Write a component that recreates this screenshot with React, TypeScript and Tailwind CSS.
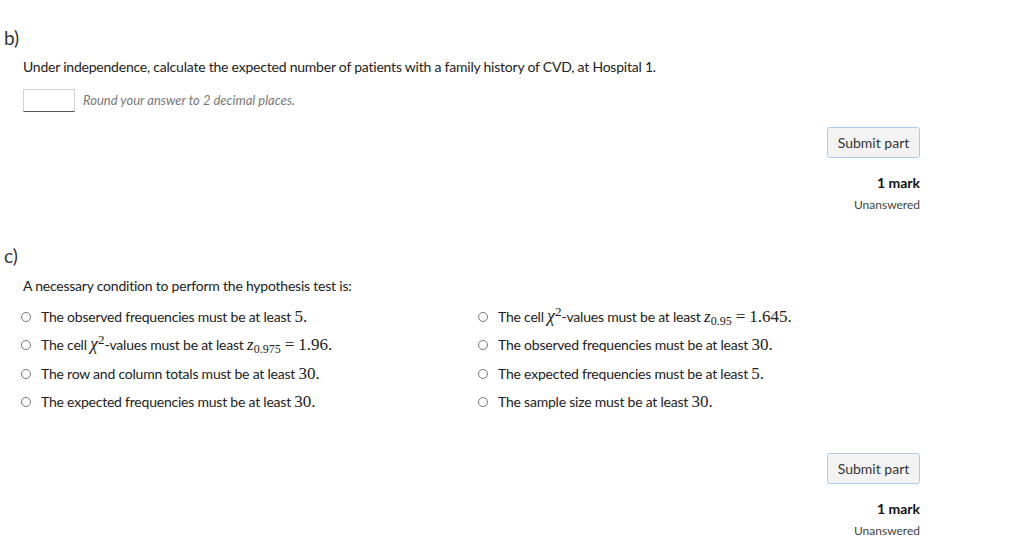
import React from 'react';

type Option = { id: string; content: React.ReactNode };

const M = ({ children }: { children: React.ReactNode }) => (
  <span className="font-['Liberation_Serif',serif] text-[17px] leading-none tracking-normal">{children}</span>
);

const Eq = ({ value }: { value: string }) => (
  <span className="font-['Liberation_Serif',serif] text-[17px] leading-none tracking-normal">
    <span className="mx-[4px]">=</span>
    {value}
  </span>
);

const Chi = () => (
  <span className="font-['Liberation_Serif',serif] text-[18px] leading-none tracking-normal">
    <i>χ</i>
    <sup className="text-[13px] leading-none">2</sup>
  </span>
);

const Z = ({ sub }: { sub: string }) => (
  <span className="font-['Liberation_Serif',serif] text-[17px] leading-none tracking-normal">
    <i>z</i>
    <sub className="text-[12px] leading-none">{sub}</sub>
  </span>
);

const options: Option[] = [
  { id: 'a', content: <>The observed frequencies must be at least <M>5.</M></> },
  { id: 'e', content: <>The cell <Chi />-values must be at least <Z sub="0.95" /><Eq value="1.645." /></> },
  { id: 'b', content: <>The cell <Chi />-values must be at least <Z sub="0.975" /><Eq value="1.96." /></> },
  { id: 'f', content: <>The observed frequencies must be at least <M>30.</M></> },
  { id: 'c', content: <>The row and column totals must be at least <M>30.</M></> },
  { id: 'g', content: <>The expected frequencies must be at least <M>5.</M></> },
  { id: 'd', content: <>The expected frequencies must be at least <M>30.</M></> },
  { id: 'h', content: <>The sample size must be at least <M>30.</M></> },
];

function PartFooter({ top }: { top: string }) {
  return (
    <div className={`flex flex-col items-end ${top}`}>
      <button className="h-[31px] w-[93px] rounded-[3px] border border-[#a9cdea] bg-[#f3f3f3] text-[14px] text-[#333]">
        Submit part
      </button>
      <div className="mt-[15px] text-[14px] leading-[20px] font-bold text-[#111]">1 mark</div>
      <div className="mt-[4px] text-[12px] leading-[16px] text-[#444]">Unanswered</div>
    </div>
  );
}

export default function App() {
  return (
    <div className="min-h-screen bg-white pl-[4px] pr-[115px] font-['Lato',sans-serif] text-[14px] text-[#222]">
      <section>
        <h3 className="pt-[28px] text-[19px] leading-[20px] text-[#333]">b)</h3>
        <div className="pl-[19px] tracking-[-0.22px]">
          <p className="mt-[9px] leading-[20px]">
            Under independence, calculate the expected number of patients with a family history of CVD, at Hospital 1.
          </p>
          <div className="mt-[12px] flex items-center gap-[8px]">
            <input
              type="text"
              className="h-[23px] w-[52px] border border-[#d4d4d4] border-b-[#555] bg-white"
            />
            <span className="text-[13px] italic tracking-normal text-[#777]">Round your answer to 2 decimal places.</span>
          </div>
        </div>
        <PartFooter top="mt-[15px]" />
      </section>

      <section>
        <h3 className="mt-[33px] text-[19px] leading-[20px] text-[#333]">c)</h3>
        <div className="pl-[19px] tracking-[-0.22px]">
          <p className="mt-[10px] leading-[20px]">A necessary condition to perform the hypothesis test is:</p>
          <div className="-ml-[2px] mt-[11px] grid grid-cols-[457px_1fr] gap-y-[8.4px]">
            {options.map((o) => (
              <label key={o.id} className="flex h-[20px] items-center gap-[10px] whitespace-nowrap">
                <span className="h-[10px] w-[10px] shrink-0 rounded-full border border-[#777] bg-white" />
                <span className="leading-[20px]">{o.content}</span>
              </label>
            ))}
          </div>
        </div>
        <PartFooter top="mt-[41px]" />
      </section>
    </div>
  );
}
